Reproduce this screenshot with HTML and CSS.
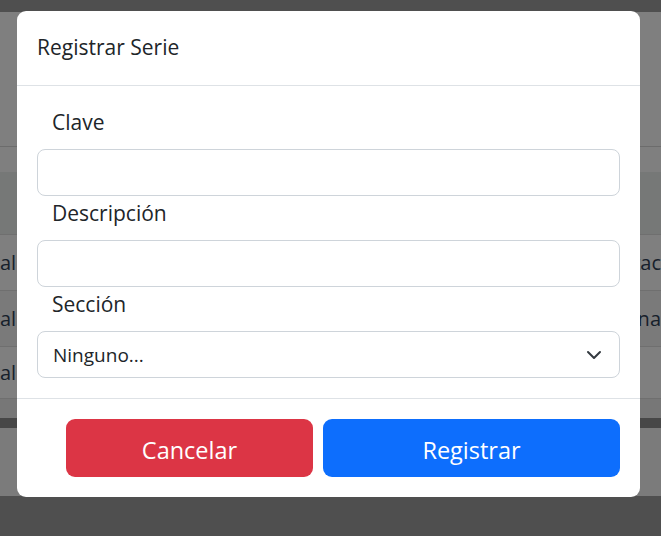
FILE: index.html
```html
<!DOCTYPE html>
<html lang="es">
<head>
<meta charset="utf-8">
<title>Registrar Serie</title>
<link rel="stylesheet" href="styles.css">
</head>
<body>
<div class="page">
  <div class="nav"></div>
  <div class="top-area"></div>
  <div class="pre-table"></div>
  <div class="thead"></div>
  <div class="trow">
    <span class="cell-left">al</span>
    <span class="cell-right">tac</span>
  </div>
  <div class="trow striped">
    <span class="cell-left">al</span>
    <span class="cell-right">na</span>
  </div>
  <div class="trow last">
    <span class="cell-left">al</span>
    <span class="cell-right"></span>
  </div>
  <div class="post-table"></div>
  <div class="band"></div>
  <div class="lower"></div>
  <div class="bottom"></div>
</div>

<div class="modal">
  <div class="modal-header">
    <h5 class="modal-title">Registrar Serie</h5>
  </div>
  <div class="modal-body">
    <div class="group">
      <label class="label" for="clave">Clave</label>
      <input class="control" id="clave" type="text">
    </div>
    <div class="group">
      <label class="label" for="desc">Descripción</label>
      <input class="control" id="desc" type="text">
    </div>
    <div class="group">
      <label class="label" for="sec">Sección</label>
      <div class="select">
        <span class="select-text">Ninguno...</span>
        <svg class="chevron" viewBox="0 0 16 16" width="16" height="16"><path d="m2 5 6 6 6-6" fill="none" stroke="#343a40" stroke-width="2" stroke-linecap="round" stroke-linejoin="round"/></svg>
      </div>
    </div>
  </div>
  <div class="modal-footer">
    <button class="btn btn-danger" type="button">Cancelar</button>
    <button class="btn btn-primary" type="button">Registrar</button>
  </div>
</div>
</body>
</html>
```
FILE: styles.css
```css
* { box-sizing: border-box; }
html, body { margin: 0; padding: 0; }
body {
  font-family: "Open Sans", "Noto Sans", sans-serif;
  color: #212529;
  background: #4f4f4f;
  overflow: hidden;
}
.page {
  display: flex;
  flex-direction: column;
  height: 536px;
}
.nav { height: 12px; background: #4f4f4f; }
.top-area { height: 135px; background: #7f7f7f; border-bottom: 1px solid #6c6c6c; }
.pre-table { height: 25px; background: #7f7f7f; }
.thead { height: 62px; background: #767877; }
.trow {
  height: 56px;
  background: #7f7f7f;
  border-top: 1px solid #6f6f6f;
  display: flex;
  align-items: center;
  justify-content: space-between;
  font-size: 20px;
  color: #16202b;
}
.trow.striped { background: #7a7a7a; }
.trow.last { height: 53px; border-bottom: 1px solid #6f6f6f; }
.cell-left { padding-left: 0; }
.cell-right { white-space: nowrap; }
.post-table { height: 19px; background: #777; }
.band { height: 10px; background: #474747; }
.lower { height: 68px; background: #7b7b7b; }
.bottom { flex: 1; background: #4f4f4f; }

.modal {
  position: fixed;
  top: 11px;
  left: 17px;
  width: 623px;
  background: #fff;
  border-radius: 9px;
  display: flex;
  flex-direction: column;
}
.modal-header {
  padding: 21px 20px 22px;
  border-bottom: 1px solid #dee2e6;
}
.modal-title {
  margin: 0;
  font-size: 21px;
  font-weight: 400;
  line-height: 31px;
}
.modal-body {
  padding: 21px 20px 20px;
  display: flex;
  flex-direction: column;
  gap: 2px;
}
.group { display: flex; flex-direction: column; }
.label {
  display: block;
  padding: 0 15px;
  font-size: 21px;
  line-height: 30px;
  margin-bottom: 12px;
}
.control {
  height: 47px;
  width: 100%;
  border: 1px solid #ced4da;
  border-radius: 8px;
  background: #fff;
  font: inherit;
  font-size: 19px;
  padding: 0 15px;
  outline: none;
}
.select {
  height: 47px;
  border: 1px solid #ced4da;
  border-radius: 8px;
  display: flex;
  align-items: center;
  justify-content: space-between;
  padding: 0 17px 0 15px;
}
.select-text { font-size: 19px; }
.chevron { width: 16px; height: 16px; }
.modal-footer {
  border-top: 1px solid #dee2e6;
  padding: 20px;
  display: flex;
  justify-content: flex-end;
  gap: 10px;
}
.btn {
  height: 58px;
  border: none;
  border-radius: 9px;
  color: #fff;
  font-family: inherit;
  font-size: 23.5px;
  padding: 3px 0 0;
  cursor: pointer;
}
.btn-danger { background: #dc3545; width: 247px; }
.btn-primary { background: #0d6efd; width: 297px; }
```
